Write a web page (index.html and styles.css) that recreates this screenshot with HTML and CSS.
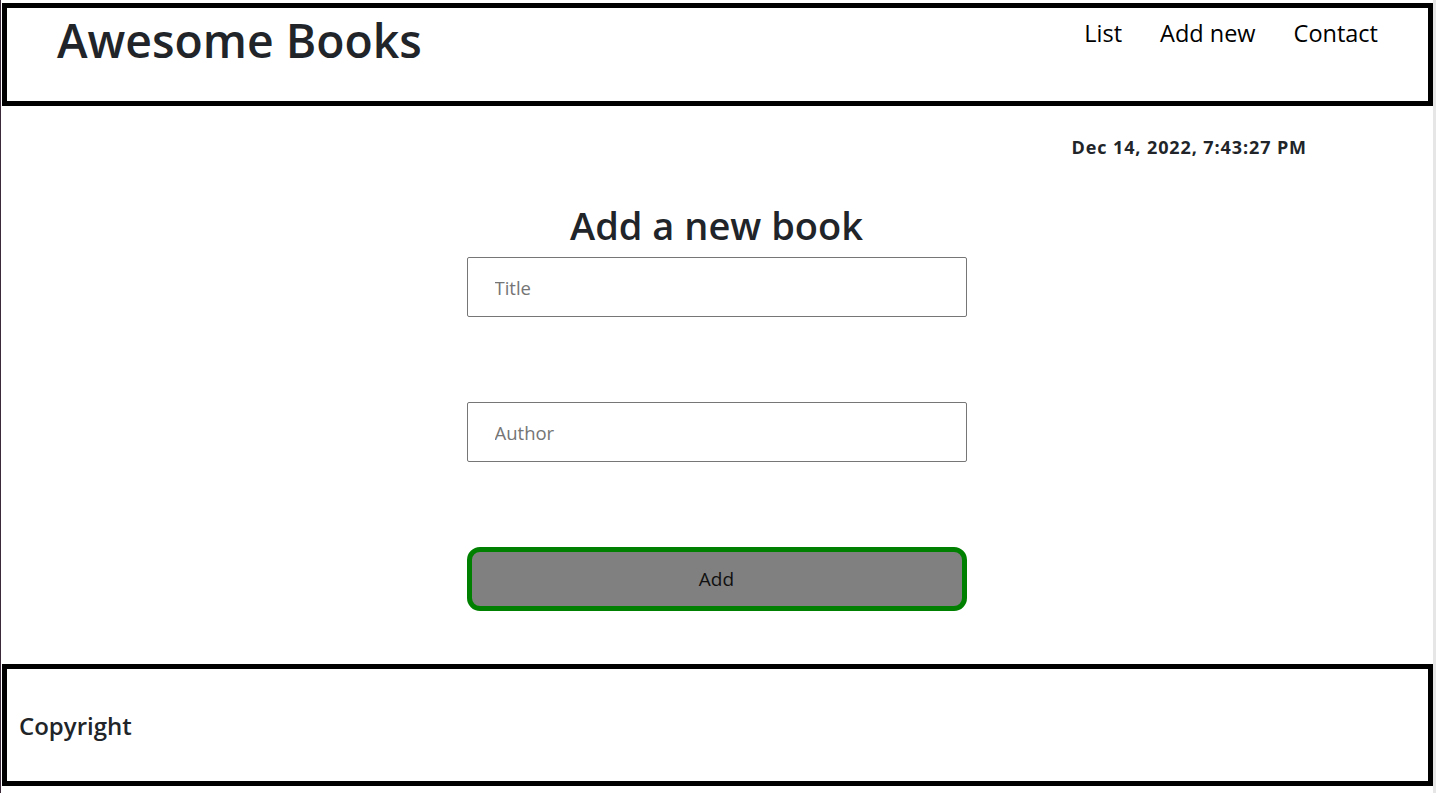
FILE: index.html
```html
<!DOCTYPE html>
<html lang="en">
<head>
<meta charset="utf-8">
<title>Awesome Books</title>
<link rel="stylesheet" href="styles.css">
</head>
<body>
<div class="page">
  <header class="site-header">
    <h1 class="brand">Awesome Books</h1>
    <nav class="nav">
      <a href="#" class="nav-link">List</a>
      <a href="#" class="nav-link">Add new</a>
      <a href="#" class="nav-link">Contact</a>
    </nav>
  </header>
  <main class="content">
    <p class="date">Dec 14, 2022, 7:43:27 PM</p>
    <section class="add-section">
      <h2 class="add-title">Add a new book</h2>
      <form class="add-form">
        <input class="field" type="text" placeholder="Title">
        <input class="field" type="text" placeholder="Author">
        <button class="add-btn" type="button">Add</button>
      </form>
    </section>
  </main>
  <footer class="site-footer">
    <p class="copy">Copyright</p>
  </footer>
</div>
</body>
</html>
```

FILE: styles.css
```css
* { box-sizing: border-box; }
html, body { margin: 0; padding: 0; background: #fff; }
body {
  font-family: "Open Sans", "Noto Sans", sans-serif;
  color: #212529;
  height: 793px;
  overflow: hidden;
}
.page {
  border-left: 1px solid #3a2a3a;
  border-right: 3px solid #e6e6e6;
  min-height: 793px;
  padding: 3px 0 0 1px;
}
.site-header {
  border: 5px solid #000;
  height: 103px;
  display: flex;
  justify-content: space-between;
  align-items: flex-start;
  padding: 0 50px 0 50px;
}
.brand {
  margin: 5px 0 0;
  font-size: 46.3px;
  font-weight: 600;
  line-height: 56px;
}
.nav { display: flex; gap: 38px; margin-top: 9px; }
.nav-link {
  color: #000;
  text-decoration: none;
  font-size: 23.5px;
  line-height: 32px;
}
.content { padding: 29px 0 0; height: 558px; }
.date {
  margin: 0;
  text-align: right;
  padding-right: 126px;
  font-size: 18px;
  font-weight: 700;
  line-height: 24px;
  letter-spacing: 0.9px;
}
.add-section { display: flex; flex-direction: column; align-items: center; padding-right: 2px; }
.add-title {
  margin: 44px 0 0;
  font-size: 38px;
  font-weight: 600;
  line-height: 44px;
}
.add-form { display: flex; flex-direction: column; align-items: center; gap: 85px; margin-top: 10px; }
.field {
  width: 500px;
  height: 60px;
  border: 1px solid #767676;
  border-radius: 2px;
  padding: 0 27px;
  font-family: inherit;
  font-size: 18.5px;
  color: #212529;
}
.field::placeholder { color: #757575; }
.add-btn {
  width: 500px;
  height: 64px;
  border: 5px solid #008000;
  border-radius: 13px;
  background: #808080;
  font-family: inherit;
  font-size: 19px;
  color: #111;
}
.site-footer {
  border: 5px solid #000;
  height: 122px;
  display: flex;
  align-items: center;
  padding: 0 12px;
}
.copy { margin: 0; font-size: 24px; font-weight: 600; }
```
